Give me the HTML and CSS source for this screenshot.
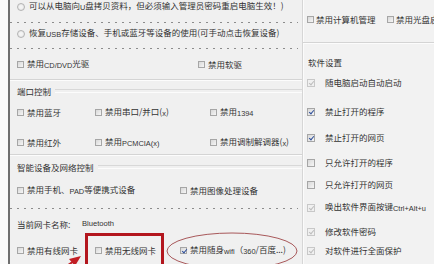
FILE: index.html
```html
<!DOCTYPE html>
<html lang="zh-CN">
<head>
<meta charset="utf-8">
<link rel="stylesheet" href="styles.css">
</head>
<body>
<div class="page">
  <div class="gutter"></div>
  <div class="left">
    <div class="row r1"><span class="radio"></span><span class="t">可以从电脑向<span class="lat">U</span>盘拷贝资料，但必须输入管理员密码重启电脑生效！)</span></div>
    <div class="dash d1"></div>
    <div class="row r2"><span class="radio"></span><span class="t">恢复<span class="lat">USB</span>存储设备、手机或蓝牙等设备的使用(可手动点击恢复设备)</span></div>
    <div class="dash d2"></div>
    <div class="row r3">
      <label class="item w181"><span class="cb"></span><span class="t">禁用<span class="lat">CD/DVD</span>光驱</span></label>
      <label class="item"><span class="cb"></span><span class="t">禁用软驱</span></label>
    </div>
    <div class="etch e1"></div>
    <div class="head h1"><span>端口控制</span></div>
    <div class="row r4">
      <label class="item w78"><span class="cb"></span><span class="t">禁用蓝牙</span></label>
      <label class="item w115"><span class="cb"></span><span class="t">禁用串口/并口(<span class="lat">x</span>)</span></label>
      <label class="item"><span class="cb"></span><span class="t">禁用<span class="lat">1394</span></span></label>
    </div>
    <div class="row r5">
      <label class="item w78"><span class="cb"></span><span class="t">禁用红外</span></label>
      <label class="item w115"><span class="cb"></span><span class="t">禁用<span class="lat">PCMCIA(x)</span></span></label>
      <label class="item"><span class="cb"></span><span class="t">禁用调制解调器(<span class="lat">x</span>)</span></label>
    </div>
    <div class="etch e2"></div>
    <div class="head h2"><span>智能设备及网络控制</span></div>
    <div class="row r6">
      <label class="item w163"><span class="cb"></span><span class="t">禁用手机、<span class="lat">PAD</span>等便携式设备</span></label>
      <label class="item"><span class="cb"></span><span class="t">禁用图像处理设备</span></label>
    </div>
    <div class="dash d3"></div>
    <div class="row r7">
      <span class="item w65">当前网卡名称:</span>
      <span class="lat bt">Bluetooth</span>
    </div>
    <div class="row r8">
      <label class="item w78"><span class="cb"></span><span class="t">禁用有线网卡</span></label>
      <label class="item w85"><span class="cb"></span><span class="t">禁用无线网卡</span></label>
      <label class="item"><span class="cb on"></span><span class="t">禁用随身<span class="lat">wifi</span>（<span class="lat">360</span>/百度...)</span></label>
    </div>
  </div>
  <div class="right">
    <div class="rtop">
      <label class="ritem w78r"><span class="cb"></span><span class="t">禁用计算机管理</span></label>
      <label class="ritem"><span class="cb"></span><span class="t">禁用光盘启</span></label>
    </div>
    <div class="etch e3"></div>
    <div class="rhead">软件设置</div>
    <ul class="sw">
      <li><span class="cb on dis"></span><span class="t">随电脑启动自动启动</span></li>
      <li><span class="cb on"></span><span class="t">禁止打开的程序</span></li>
      <li><span class="cb on"></span><span class="t">禁止打开的网页</span></li>
      <li><span class="cb"></span><span class="t">只允许打开的程序</span></li>
      <li><span class="cb"></span><span class="t">只允许打开的网页</span></li>
      <li><span class="cb on dis"></span><span class="t">唤出软件界面按键<span class="lat">Ctrl+Alt+u</span></span></li>
      <li><span class="cb on dis"></span><span class="t">修改软件密码</span></li>
      <li><span class="cb on dis"></span><span class="t">对软件进行全面保护</span></li>
    </ul>
  </div>
  <div class="redbox"></div>
  <svg class="marks" width="434" height="264" viewBox="0 0 434 264">
    <ellipse cx="232" cy="251" rx="65" ry="18" fill="none" stroke="#a8585a" stroke-width="1"/>
    <line x1="58" y1="272" x2="74" y2="261" stroke="#c21e24" stroke-width="2"/>
    <polygon points="81,256 69,259 75,266" fill="#c21e24"/>
  </svg>
</div>
</body>
</html>
```
FILE: styles.css
```css
* { box-sizing: border-box; margin: 0; padding: 0; }
html, body { width: 434px; height: 264px; overflow: hidden; }
body {
  background: #f0f0f0;
  font-family: "Noto Sans CJK SC", "Liberation Sans", sans-serif;
  font-size: 8.5px;
  color: #333;
}
.page { position: relative; display: flex; width: 434px; height: 264px; }
.gutter { background: #fafafa; border-right: 2px solid #6f6f6f; flex: none; width: 10px; }
.left { width: 292px; flex: none; display: flex; flex-direction: column; background: #f0f0f0; }
.right { flex: 1; min-width: 0; display: flex; flex-direction: column; border-left: 1px solid #d6d6d6; box-shadow: inset 1px 0 0 #fbfbfb; background: #f2f2f2; padding-left: 4px; overflow: hidden; }

.t { white-space: nowrap; line-height: 13px; }
.lat { font-family: "Liberation Sans", sans-serif; font-size: 7.4px; vertical-align: -1px; }

.row { height: 13px; display: flex; align-items: center; padding-left: 7px; white-space: nowrap; flex: none; }
.item { display: flex; align-items: center; flex: none; }
.w181 { width: 181px; }
.w78 { width: 78px; }
.w115 { width: 115px; }
.w163 { width: 163px; }
.w85 { width: 85px; }
.w65 { width: 65px; }
.bt { font-size: 7.6px; vertical-align: 0; }

.radio { width: 8px; height: 8px; border-radius: 50%; border: 1px solid #b4b4b4; background: radial-gradient(circle, #f4f4f4 30%, #dcdcdc 100%); margin-right: 4px; flex: none; }
.cb { width: 7px; height: 7px; border: 1px solid #a6a6a6; background: linear-gradient(135deg, #d8d8d8, #f6f6f6); margin-right: 3px; flex: none; position: relative; }
.cb.on::after { content: ""; position: absolute; left: 1.5px; top: 0px; width: 2px; height: 4px; border: solid #2f4f9a; border-width: 0 1.2px 1.2px 0; transform: rotate(40deg); }
.cb.dis { border-color: #c8c8c8; background: #f0f0f0; }
.cb.dis::after { border-color: #bdbdbd; }

.dash { height: 1px; flex: none; margin-right: 4px; background: repeating-linear-gradient(90deg, #8c8c8c 0 2px, transparent 2px 7px); }
.etch { height: 2px; flex: none; border-top: 1px solid #d4d4d4; border-bottom: 1px solid #fcfcfc; }
.head { height: 13px; flex: none; display: flex; align-items: center; padding-left: 7px; }
.head span { white-space: nowrap; }
.head::after { content: ""; flex: 1; height: 2px; margin-left: 4px; border-top: 1px solid #d8d8d8; border-bottom: 1px solid #fcfcfc; }

.r1 { margin-top: 0; }
.d1 { margin-top: 9px; }
.r2 { margin-top: 4px; }
.d2 { margin-top: 8px; }
.r3 { margin-top: 9px; }
.e1 { margin-top: 8px; }
.h1 { margin-top: 3px; }
.r4 { margin-top: 9px; }
.r5 { margin-top: 17px; }
.e2 { margin-top: 5px; }
.h2 { margin-top: 4px; }
.r6 { margin-top: 11px; }
.d3 { margin-top: 11px; }
.r7 { margin-top: 8px; }
.r8 { margin-top: 14px; }

.rtop { height: 13px; margin-top: 13px; display: flex; align-items: center; white-space: nowrap; flex: none; }
.ritem { display: flex; align-items: center; flex: none; }
.ritem .cb { margin-right: 2px; }
.w78r { width: 80px; }
.e3 { margin-top: 16px; margin-left: -4px; }
.rhead { height: 13px; line-height: 13px; margin-top: 12px; padding-left: 1px; flex: none; }
.sw { list-style: none; display: flex; flex-direction: column; }
.sw li { height: 13px; display: flex; align-items: center; white-space: nowrap; }
.sw .cb { width: 8px; height: 8px; margin-right: 10px; }
.sw li:nth-child(1) { margin-top: 7px; }
.sw li:nth-child(2) { margin-top: 16px; }
.sw li:nth-child(3) { margin-top: 13px; }
.sw li:nth-child(4) { margin-top: 12px; }
.sw li:nth-child(5) { margin-top: 9px; }
.sw li:nth-child(6) { margin-top: 10px; }
.sw li:nth-child(7) { margin-top: 11px; }
.sw li:nth-child(8) { margin-top: 6px; }

.redbox { position: absolute; left: 85px; top: 233px; width: 79px; height: 40px; border: 3px solid #b3161e; }
.marks { position: absolute; left: 0; top: 0; pointer-events: none; }
```
